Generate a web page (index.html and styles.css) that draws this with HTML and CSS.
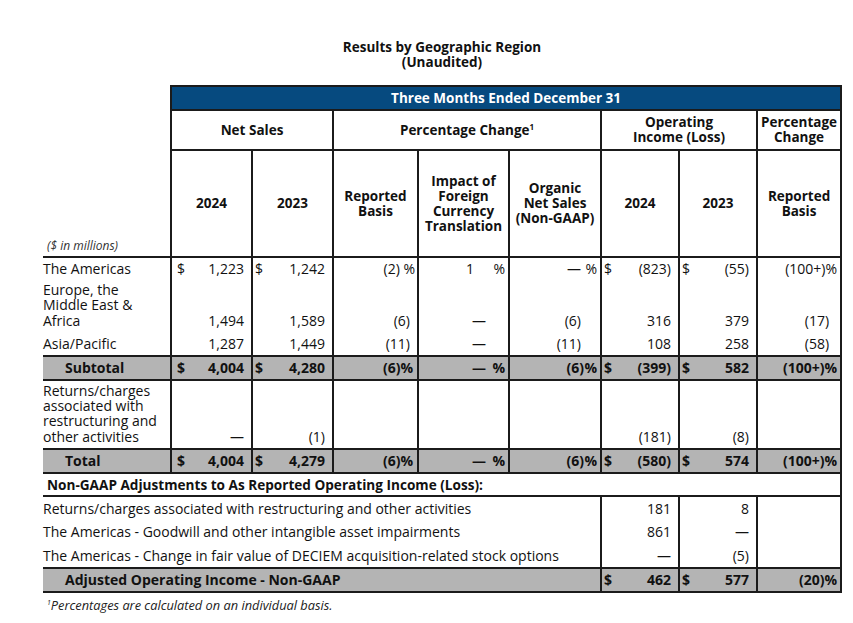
FILE: index.html
```html
<!DOCTYPE html>
<html lang="en">
<head>
<meta charset="utf-8">
<title>Results by Geographic Region</title>
<link rel="stylesheet" href="styles.css">
</head>
<body>
<div class="page">
  <h1 class="title">Results by Geographic Region<br>(Unaudited)</h1>
  <table class="fin">
    <colgroup>
      <col class="c-label"><col class="c-ns"><col class="c-ns"><col class="c-rep"><col class="c-imp"><col class="c-org"><col class="c-oi"><col class="c-oi"><col class="c-pct">
    </colgroup>
    <thead>
      <tr class="r-band">
        <td class="units" rowspan="3">($ in millions)</td>
        <th colspan="8" class="band">Three Months Ended December 31</th>
      </tr>
      <tr class="r-group">
        <th colspan="2">Net Sales</th>
        <th colspan="3">Percentage Change<sup>1</sup></th>
        <th colspan="2">Operating<br>Income (Loss)</th>
        <th>Percentage<br>Change</th>
      </tr>
      <tr class="r-sub">
        <th>2024</th>
        <th>2023</th>
        <th>Reported<br>Basis</th>
        <th>Impact of<br>Foreign<br>Currency<br>Translation</th>
        <th>Organic<br>Net Sales<br>(Non-GAAP)</th>
        <th>2024</th>
        <th>2023</th>
        <th>Reported<br>Basis</th>
      </tr>
    </thead>
    <tbody>
      <tr class="r-first">
        <td class="lbl">The Americas</td>
        <td class="n c1"><span class="cur">$</span>1,223</td>
        <td class="n"><span class="cur">$</span>1,242</td>
        <td class="n pr2">(2)&nbsp;%</td>
        <td class="n imp"><span class="one">1</span><span class="sfx">%</span></td>
        <td class="n org">—<span class="sfx">%</span></td>
        <td class="n"><span class="cur">$</span>(823)</td>
        <td class="n"><span class="cur">$</span>(55)</td>
        <td class="n pr3">(100+)%</td>
      </tr>
      <tr class="r-emea">
        <td class="lbl">Europe, the<br>Middle East &amp;<br>Africa</td>
        <td class="n c1">1,494</td>
        <td class="n">1,589</td>
        <td class="n pr7">(6)</td>
        <td class="n imp">—<span class="sfx"></span></td>
        <td class="n org">(6)<span class="sfx"></span></td>
        <td class="n">316</td>
        <td class="n">379</td>
        <td class="n pr11">(17)</td>
      </tr>
      <tr class="r-asia">
        <td class="lbl">Asia/Pacific</td>
        <td class="n c1">1,287</td>
        <td class="n">1,449</td>
        <td class="n pr7">(11)</td>
        <td class="n imp">—<span class="sfx"></span></td>
        <td class="n org">(11)<span class="sfx"></span></td>
        <td class="n">108</td>
        <td class="n">258</td>
        <td class="n pr11">(58)</td>
      </tr>
      <tr class="r-total">
        <td class="lbl">Subtotal</td>
        <td class="n c1"><span class="cur">$</span>4,004</td>
        <td class="n"><span class="cur">$</span>4,280</td>
        <td class="n pr4">(6)%</td>
        <td class="n imp">—<span class="sfx">%</span></td>
        <td class="n org">(6)<span class="sfx sfx-b">%</span></td>
        <td class="n"><span class="cur">$</span>(399)</td>
        <td class="n"><span class="cur">$</span>582</td>
        <td class="n pr3">(100+)%</td>
      </tr>
      <tr class="r-returns">
        <td class="lbl">Returns/charges<br>associated with<br>restructuring and<br>other activities</td>
        <td class="n c1">—</td>
        <td class="n">(1)</td>
        <td class="n"></td>
        <td class="n"></td>
        <td class="n"></td>
        <td class="n">(181)</td>
        <td class="n">(8)</td>
        <td class="n"></td>
      </tr>
      <tr class="r-total">
        <td class="lbl">Total</td>
        <td class="n c1"><span class="cur">$</span>4,004</td>
        <td class="n"><span class="cur">$</span>4,279</td>
        <td class="n pr4">(6)%</td>
        <td class="n imp">—<span class="sfx">%</span></td>
        <td class="n org">(6)<span class="sfx sfx-b">%</span></td>
        <td class="n"><span class="cur">$</span>(580)</td>
        <td class="n"><span class="cur">$</span>574</td>
        <td class="n pr3">(100+)%</td>
      </tr>
      <tr class="r-adjhead">
        <td class="adjhead" colspan="9">Non-GAAP Adjustments to As Reported Operating Income (Loss):</td>
      </tr>
      <tr class="r-adj">
        <td class="lbl wide" colspan="6">Returns/charges associated with restructuring and other activities</td>
        <td class="n">181</td>
        <td class="n">8</td>
        <td class="n"></td>
      </tr>
      <tr class="r-adj">
        <td class="lbl wide" colspan="6">The Americas - Goodwill and other intangible asset impairments</td>
        <td class="n">861</td>
        <td class="n">—</td>
        <td class="n"></td>
      </tr>
      <tr class="r-adj">
        <td class="lbl wide" colspan="6">The Americas - Change in fair value of DECIEM acquisition-related stock options</td>
        <td class="n">—</td>
        <td class="n">(5)</td>
        <td class="n"></td>
      </tr>
      <tr class="r-total r-adjusted">
        <td class="lbl" colspan="6">Adjusted Operating Income - Non-GAAP</td>
        <td class="n"><span class="cur">$</span>462</td>
        <td class="n"><span class="cur">$</span>577</td>
        <td class="n pr3">(20)%</td>
      </tr>
    </tbody>
  </table>
  <p class="note"><sup>1</sup>Percentages are calculated on an individual basis.</p>
</div>
</body>
</html>
```

FILE: styles.css
```css
* { box-sizing: border-box; }

body {
  margin: 0;
  background: #fff;
  color: #111;
  font-family: "Open Sans", "Liberation Sans", sans-serif;
}

.page {
  width: 853px;
  padding: 40px 0 0 43px;
}

.title {
  width: 798px;
  margin: 0 0 15px;
  font-size: 13.5px;
  line-height: 15px;
  font-weight: 700;
  text-align: center;
}

.fin {
  width: 798px;
  border-collapse: collapse;
  table-layout: fixed;
  font-size: 14px;
  line-height: 15.3px;
}

.c-label { width: 128px; }
.c-ns { width: 81px; }
.c-rep { width: 85px; }
.c-imp { width: 91px; }
.c-org { width: 92px; }
.c-oi { width: 78px; }
.c-pct { width: 84px; }

.fin th,
.fin td {
  padding: 0;
  border: 0;
}

.fin thead th {
  border: 2px solid #1b1b1b;
  font-weight: 700;
  font-size: 13.5px;
  line-height: 15px;
  text-align: center;
  vertical-align: middle;
}

.fin thead th.band {
  background: #064a7f;
  color: #fff;
  height: 24px;
  line-height: 18px;
}

.fin thead th sup {
  font-size: 8px;
  line-height: 0;
  vertical-align: 5px;
}

.r-group { height: 40px; }
.r-sub { height: 107px; }

.units {
  border-bottom: 2px solid #1b1b1b !important;
  vertical-align: bottom;
  padding: 0 0 4px 4px !important;
  font-size: 12px;
  line-height: 13px;
  font-style: italic;
  color: #333;
}

.fin tbody td {
  vertical-align: bottom;
  padding-bottom: 4px;
  white-space: nowrap;
}

.fin tbody td.n {
  border-left: 2px solid #1b1b1b;
  border-right: 2px solid #1b1b1b;
  text-align: right;
  padding-right: 7px;
  padding-left: 2px;
}

.fin tbody td.c1 { padding-left: 5px; }

.lbl { padding-left: 4px; }

.cur { float: left; }

.pr2 { padding-right: 2px !important; }
.pr3 { padding-right: 3px !important; }
.pr4 { padding-right: 4px !important; }
.pr7 { padding-right: 7px !important; }
.pr11 { padding-right: 11px !important; }

.fin tbody td.imp,
.fin tbody td.org { padding-right: 3px; }

.sfx {
  display: inline-block;
  text-align: right;
}

.imp .sfx { width: 19px; }
.org .sfx { width: 16px; }
.org .sfx-b { width: 13px; }
.one { margin-right: 12px; }

.r-first { height: 23px; }
.r-emea { height: 52px; }
.r-asia { height: 24px; }
.r-returns { height: 69px; }

.r-total td {
  background: #b4b4b4;
  font-weight: 700;
  border-top: 2px solid #1b1b1b;
  border-bottom: 2px solid #1b1b1b;
  vertical-align: middle !important;
  padding-bottom: 0 !important;
  height: 24px;
}

.r-total td.lbl { padding-left: 22px; }

.r-adjhead td {
  border-top: 2px solid #1b1b1b;
  border-bottom: 2px solid #1b1b1b;
  border-right: 2px solid #1b1b1b;
  font-weight: 700;
  font-size: 13.6px;
  padding: 0 0 0 4px !important;
  vertical-align: middle !important;
  height: 23px;
}

.r-adj { height: 24px; }
.r-adj td { vertical-align: middle !important; padding-bottom: 0 !important; }

.note {
  margin: 3px 0 0 4px;
  font-size: 12.8px;
  font-style: italic;
  color: #222;
}

.note sup {
  font-size: 7px;
  vertical-align: 5px;
  line-height: 0;
}
```
